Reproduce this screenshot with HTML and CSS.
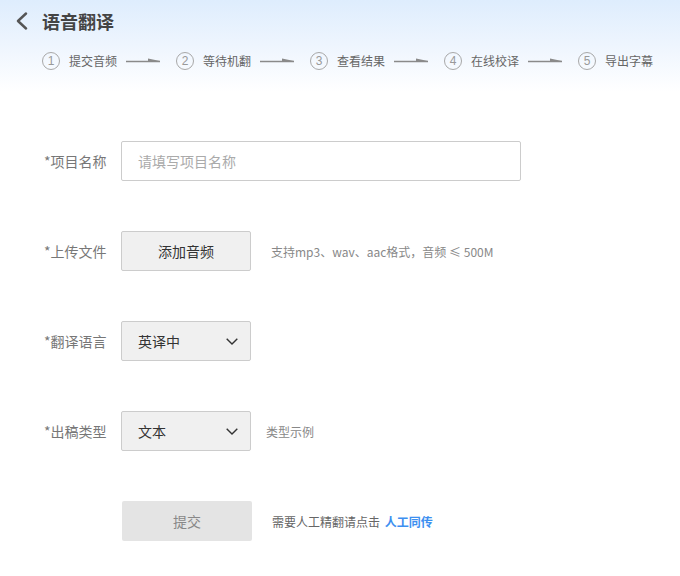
FILE: index.html
```html
<!DOCTYPE html>
<html lang="zh-CN">
<head>
<meta charset="utf-8">
<title>语音翻译</title>
<link rel="stylesheet" href="styles.css">
</head>
<body>
<header class="header">
  <div class="title-row">
    <svg class="back" width="14" height="18" viewBox="0 0 14 18"><path d="M11 1.5 L3 9 L11 16.5" fill="none" stroke="#555" stroke-width="2.4" stroke-linecap="round" stroke-linejoin="round"/></svg>
    <h1 class="title">语音翻译</h1>
  </div>
  <ol class="steps">
    <li class="step"><span class="num">1</span><span class="step-text">提交音频</span></li>
    <li class="arrow"><svg width="34" height="8" viewBox="0 0 34 8"><path d="M0 5.5 H34" stroke="#8a8a8a" stroke-width="1.3"/><path d="M22 2.5 L34 5 L22 5.5 Z" fill="#8a8a8a"/></svg></li>
    <li class="step"><span class="num">2</span><span class="step-text">等待机翻</span></li>
    <li class="arrow"><svg width="34" height="8" viewBox="0 0 34 8"><path d="M0 5.5 H34" stroke="#8a8a8a" stroke-width="1.3"/><path d="M22 2.5 L34 5 L22 5.5 Z" fill="#8a8a8a"/></svg></li>
    <li class="step"><span class="num">3</span><span class="step-text">查看结果</span></li>
    <li class="arrow"><svg width="34" height="8" viewBox="0 0 34 8"><path d="M0 5.5 H34" stroke="#8a8a8a" stroke-width="1.3"/><path d="M22 2.5 L34 5 L22 5.5 Z" fill="#8a8a8a"/></svg></li>
    <li class="step"><span class="num">4</span><span class="step-text">在线校译</span></li>
    <li class="arrow"><svg width="34" height="8" viewBox="0 0 34 8"><path d="M0 5.5 H34" stroke="#8a8a8a" stroke-width="1.3"/><path d="M22 2.5 L34 5 L22 5.5 Z" fill="#8a8a8a"/></svg></li>
    <li class="step"><span class="num">5</span><span class="step-text">导出字幕</span></li>
  </ol>
</header>

<form class="form">
  <div class="row">
    <label class="label">*项目名称</label>
    <input class="input" type="text" placeholder="请填写项目名称">
  </div>
  <div class="row">
    <label class="label">*上传文件</label>
    <button type="button" class="btn">添加音频</button>
    <span class="hint hint-wide">支持mp3、wav、aac格式，音频 ≤ 500M</span>
  </div>
  <div class="row">
    <label class="label">*翻译语言</label>
    <div class="select"><span>英译中</span><svg width="12" height="7" viewBox="0 0 12 7"><path d="M0.7 0.7 L6 6 L11.3 0.7" fill="none" stroke="#333" stroke-width="1.4"/></svg></div>
  </div>
  <div class="row">
    <label class="label">*出稿类型</label>
    <div class="select"><span>文本</span><svg width="12" height="7" viewBox="0 0 12 7"><path d="M0.7 0.7 L6 6 L11.3 0.7" fill="none" stroke="#333" stroke-width="1.4"/></svg></div>
    <span class="hint">类型示例</span>
  </div>
  <div class="row row-submit">
    <button type="button" class="submit">提交</button>
    <span class="hint hint-wide hint-dark">需要人工精翻请点击 <a class="link">人工同传</a></span>
  </div>
</form>
</body>
</html>
```
FILE: styles.css
```css
* { box-sizing: border-box; }
html, body { margin: 0; padding: 0; }
body {
  width: 680px;
  height: 576px;
  background: #fff;
  font-family: "Noto Sans CJK SC", "Microsoft YaHei", "Noto Sans", sans-serif;
  color: #333;
  overflow: hidden;
}
.header {
  height: 100px;
  background: linear-gradient(180deg, #deedfd 0%, #eef5fe 45%, #ffffff 92%);
  padding: 9px 0 0 15px;
}
.title-row {
  display: flex;
  align-items: center;
  height: 24px;
}
.back { display: block; margin-right: 13px; }
.title {
  margin: 0;
  font-size: 18px;
  font-weight: bold;
  color: #444;
  line-height: 24px;
}
.steps {
  list-style: none;
  margin: 18px 0 0 27px;
  padding: 0;
  display: flex;
  align-items: center;
  height: 20px;
}
.step {
  display: flex;
  align-items: center;
}
.num {
  width: 18px;
  height: 18px;
  border: 1px solid #a8a8a8;
  border-radius: 50%;
  font-size: 12px;
  color: #999;
  display: flex;
  align-items: center;
  justify-content: center;
  line-height: 1;
  font-family: "Liberation Sans", sans-serif;
}
.step-text {
  margin-left: 9px;
  font-size: 12px;
  color: #666;
  line-height: 18px;
}
.arrow {
  display: flex;
  align-items: center;
  margin: 0 16px 0 9px;
}
.arrow svg { display: block; margin-top: -2px; }

.form {
  padding: 41px 0 0 44px;
  display: flex;
  flex-direction: column;
  gap: 50px;
}
.row {
  display: flex;
  align-items: center;
  height: 40px;
}
.label {
  width: 77px;
  font-size: 14px;
  color: #777;
  white-space: nowrap;
}
.input {
  width: 400px;
  height: 40px;
  border: 1px solid #ccc;
  border-radius: 2px;
  padding: 0 16px;
  font-size: 14px;
  font-family: inherit;
  color: #333;
  outline: none;
}
.input::placeholder { color: #aaa; }
.btn {
  width: 130px;
  height: 40px;
  background: #f0f0f0;
  border: 1px solid #ccc;
  border-radius: 2px;
  font-size: 14px;
  font-family: inherit;
  color: #333;
  padding: 0;
}
.select {
  width: 130px;
  height: 40px;
  background: #f0f0f0;
  border: 1px solid #ccc;
  border-radius: 2px;
  display: flex;
  align-items: center;
  justify-content: space-between;
  padding: 0 12px 0 16px;
  font-size: 14px;
  color: #333;
}
.select svg { display: block; }
.hint {
  margin-left: 15px;
  font-size: 12px;
  color: #888;
}
.hint-wide { margin-left: 20px; }
.hint-dark { color: #666; }
.row-submit { padding-left: 78px; }
.submit {
  width: 130px;
  height: 40px;
  background: #e4e4e4;
  border: none;
  border-radius: 2px;
  font-size: 14px;
  font-family: inherit;
  color: #888;
  padding: 0;
}
.link {
  color: #3d8ff0;
  font-weight: bold;
  margin-left: 2px;
}
```
